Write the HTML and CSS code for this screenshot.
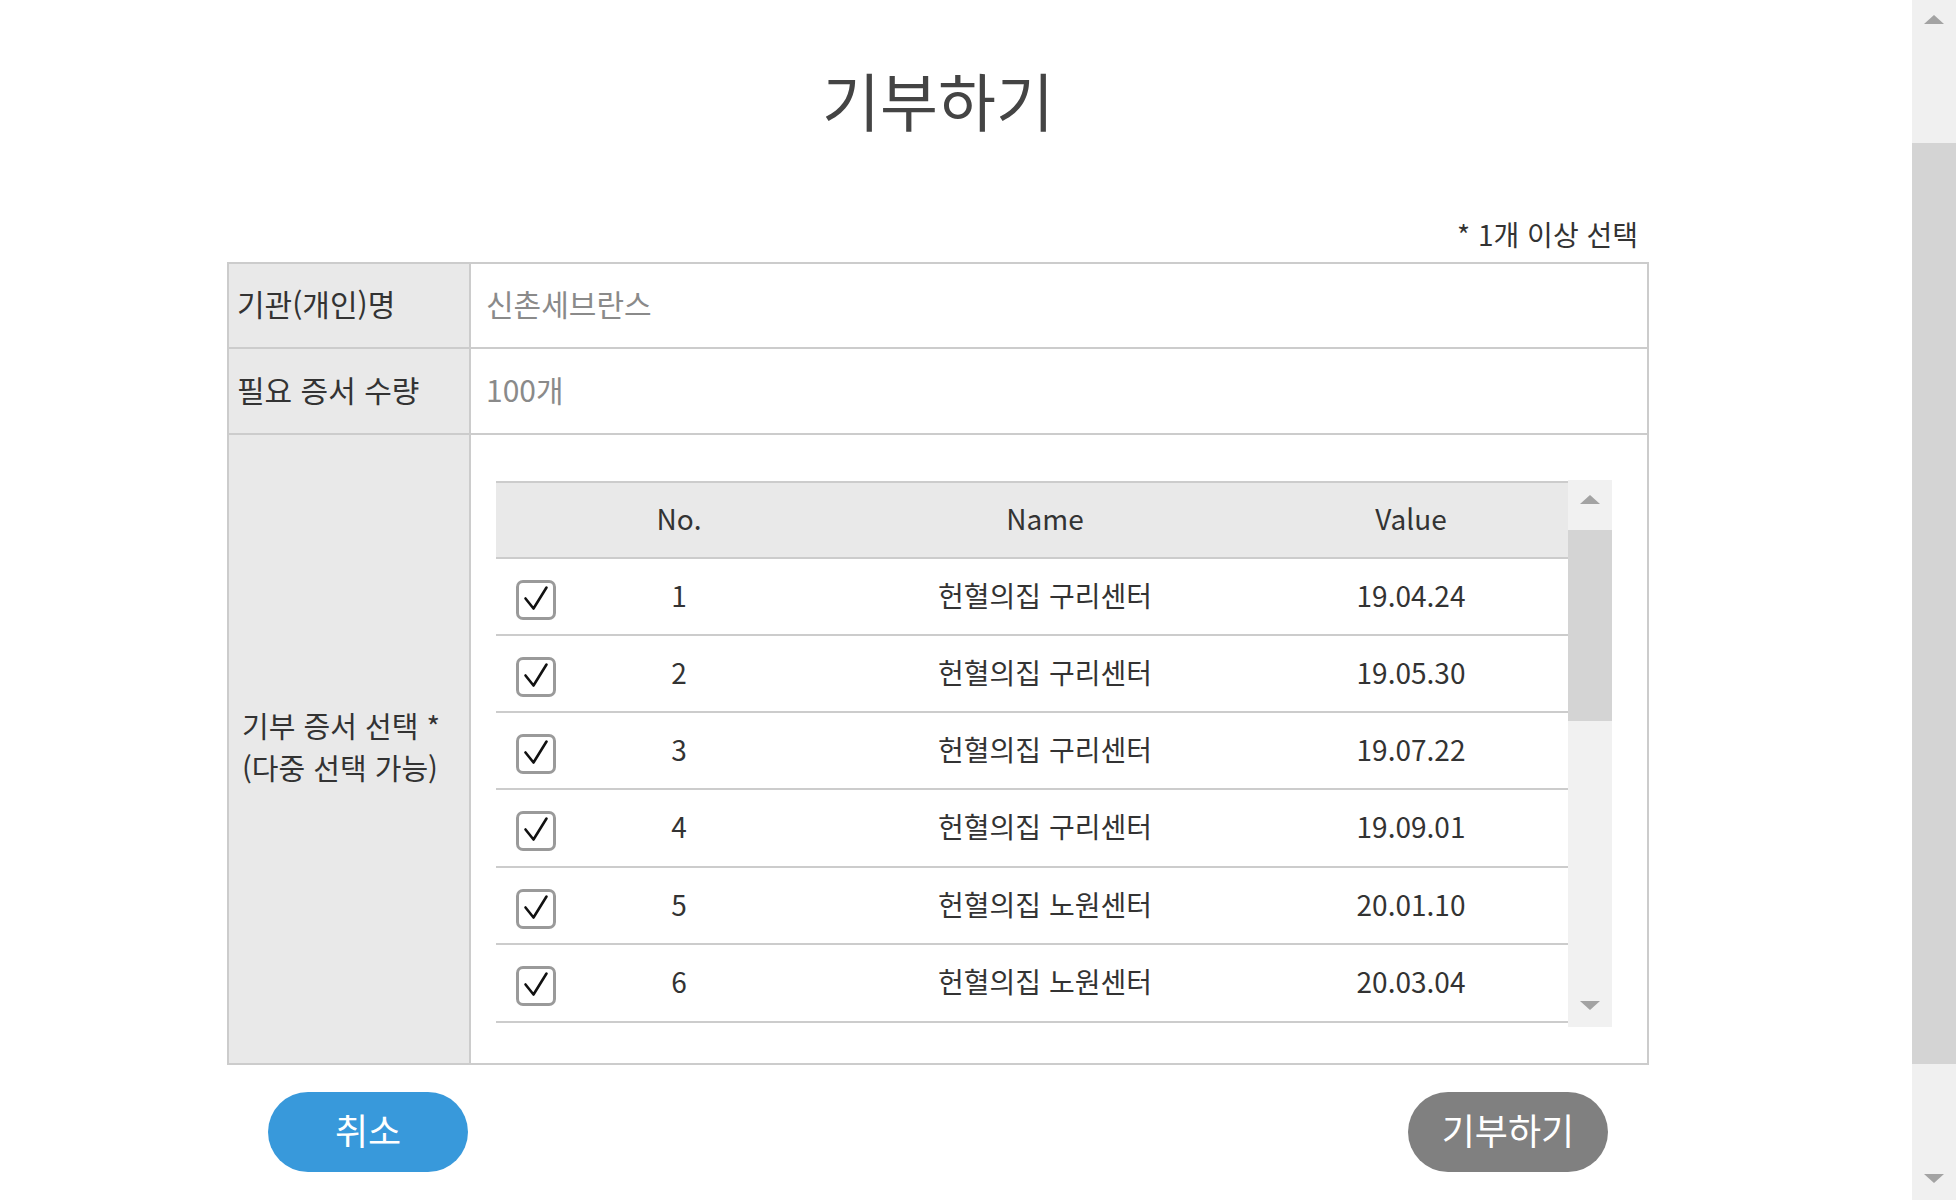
FILE: index.html
```html
<!DOCTYPE html>
<html lang="ko">
<head>
<meta charset="utf-8">
<title>기부하기</title>
<link rel="stylesheet" href="styles.css">
</head>
<body>
<div class="page">
  <main class="main">
    <div class="form">
      <h1 class="title">기부하기</h1>
      <p class="note">* 1개 이상 선택</p>
      <div class="form-table">
        <div class="form-row row-name">
          <div class="label">기관(개인)명</div>
          <div class="value">신촌세브란스</div>
        </div>
        <div class="form-row row-qty">
          <div class="label">필요 증서 수량</div>
          <div class="value">100개</div>
        </div>
        <div class="form-row row-list">
          <div class="label label-multi">기부 증서 선택 *<br>(다중 선택 가능)</div>
          <div class="list-cell">
            <div class="list-box">
              <div class="list-viewport">
                <div class="grid grid-head">
                  <div class="c-check"></div>
                  <div class="c-no">No.</div>
                  <div class="c-name">Name</div>
                  <div class="c-val">Value</div>
                </div>
                <div class="grid grid-row">
                  <div class="c-check"><span class="checkbox"><svg viewBox="0 0 34 34" width="34" height="34"><path d="M6.5 15.5 L14.5 25.5 L27.5 4.5" fill="none" stroke="#111" stroke-width="2.6" stroke-linecap="round" stroke-linejoin="round"/></svg></span></div>
                  <div class="c-no">1</div>
                  <div class="c-name">헌혈의집 구리센터</div>
                  <div class="c-val">19.04.24</div>
                </div>
                <div class="grid grid-row">
                  <div class="c-check"><span class="checkbox"><svg viewBox="0 0 34 34" width="34" height="34"><path d="M6.5 15.5 L14.5 25.5 L27.5 4.5" fill="none" stroke="#111" stroke-width="2.6" stroke-linecap="round" stroke-linejoin="round"/></svg></span></div>
                  <div class="c-no">2</div>
                  <div class="c-name">헌혈의집 구리센터</div>
                  <div class="c-val">19.05.30</div>
                </div>
                <div class="grid grid-row">
                  <div class="c-check"><span class="checkbox"><svg viewBox="0 0 34 34" width="34" height="34"><path d="M6.5 15.5 L14.5 25.5 L27.5 4.5" fill="none" stroke="#111" stroke-width="2.6" stroke-linecap="round" stroke-linejoin="round"/></svg></span></div>
                  <div class="c-no">3</div>
                  <div class="c-name">헌혈의집 구리센터</div>
                  <div class="c-val">19.07.22</div>
                </div>
                <div class="grid grid-row row-78">
                  <div class="c-check"><span class="checkbox"><svg viewBox="0 0 34 34" width="34" height="34"><path d="M6.5 15.5 L14.5 25.5 L27.5 4.5" fill="none" stroke="#111" stroke-width="2.6" stroke-linecap="round" stroke-linejoin="round"/></svg></span></div>
                  <div class="c-no">4</div>
                  <div class="c-name">헌혈의집 구리센터</div>
                  <div class="c-val">19.09.01</div>
                </div>
                <div class="grid grid-row">
                  <div class="c-check"><span class="checkbox"><svg viewBox="0 0 34 34" width="34" height="34"><path d="M6.5 15.5 L14.5 25.5 L27.5 4.5" fill="none" stroke="#111" stroke-width="2.6" stroke-linecap="round" stroke-linejoin="round"/></svg></span></div>
                  <div class="c-no">5</div>
                  <div class="c-name">헌혈의집 노원센터</div>
                  <div class="c-val">20.01.10</div>
                </div>
                <div class="grid grid-row row-78">
                  <div class="c-check"><span class="checkbox"><svg viewBox="0 0 34 34" width="34" height="34"><path d="M6.5 15.5 L14.5 25.5 L27.5 4.5" fill="none" stroke="#111" stroke-width="2.6" stroke-linecap="round" stroke-linejoin="round"/></svg></span></div>
                  <div class="c-no">6</div>
                  <div class="c-name">헌혈의집 노원센터</div>
                  <div class="c-val">20.03.04</div>
                </div>
              </div>
              <div class="vscroll">
                <div class="vs-up"><span class="tri-up"></span></div>
                <div class="vs-thumb"></div>
                <div class="vs-track"></div>
                <div class="vs-down"><span class="tri-down"></span></div>
              </div>
            </div>
          </div>
        </div>
      </div>
      <div class="actions">
        <button class="btn btn-cancel" type="button">취소</button>
        <button class="btn btn-submit" type="button">기부하기</button>
      </div>
    </div>
  </main>
  <div class="page-scroll">
    <div class="ps-up"><span class="tri-up"></span></div>
    <div class="ps-thumb"></div>
    <div class="ps-down"><span class="tri-down"></span></div>
  </div>
</div>
</body>
</html>
```

FILE: styles.css
```css
html, body {
  margin: 0;
  padding: 0;
  height: 100%;
  overflow: hidden;
  background: #ffffff;
}

body {
  font-family: "Noto Sans CJK KR", "Noto Sans", sans-serif;
  color: #333333;
}

.page {
  display: flex;
  height: 1200px;
}

.main {
  flex: 1;
  overflow: hidden;
}

.form {
  width: 1422px;
  margin-left: 227px;
  padding-top: 61px;
}

.title {
  margin: 0;
  font-size: 63px;
  line-height: 76px;
  font-weight: 400;
  color: #444444;
  text-align: center;
}

.note {
  margin: 79px 0 10px;
  padding-right: 11px;
  font-size: 28px;
  line-height: 36px;
  text-align: right;
  color: #333333;
}

.form-table {
  border: 2px solid #cccccc;
}

.form-row {
  display: flex;
  box-sizing: border-box;
  border-bottom: 2px solid #cccccc;
}

.row-name { height: 85px; }
.row-qty { height: 86px; }
.row-list { height: 628px; border-bottom: none; }

.label {
  flex: none;
  border-right: 2px solid #cccccc;
  background: #e9e9e9;
  display: flex;
  align-items: center;
  padding-left: 8px;
  padding-bottom: 5px;
  box-sizing: border-box;
  width: 242px;
  font-size: 30px;
  line-height: 42px;
  color: #333333;
}

.label-multi {
  padding-left: 13px;
  padding-bottom: 6px;
  font-size: 29px;
}

.value {
  flex: 1;
  display: flex;
  align-items: center;
  padding-left: 15px;
  padding-bottom: 5px;
  font-size: 30px;
  color: #8a8a8a;
}

.list-cell {
  flex: 1;
  padding: 45px 35px 36px 25px;
}

.list-box {
  display: flex;
  height: 547px;
}

.list-viewport {
  width: 1072px;
  overflow: hidden;
  padding-top: 1px;
}

.grid {
  display: grid;
  grid-template-columns: 84px 198px 534px 256px;
  align-items: center;
  box-sizing: border-box;
  font-size: 28px;
  color: #333333;
  text-align: center;
}

.c-no, .c-name, .c-val {
  padding-bottom: 4px;
}

.grid-head {
  height: 78px;
  border-top: 2px solid #cccccc;
  border-bottom: 2px solid #cccccc;
  background: #e9e9e9;
}

.grid-row {
  height: 77px;
  border-bottom: 2px solid #cccccc;
}

.grid-row.row-78 {
  height: 78px;
}

.c-check {
  display: flex;
  align-items: center;
  padding-left: 20px;
  padding-top: 6px;
}

.c-val {
  padding-right: 58px;
}

.checkbox {
  display: block;
  width: 40px;
  height: 40px;
  box-sizing: border-box;
  border: 3px solid #9a9a9a;
  border-radius: 7px;
  background: #ffffff;
}

.checkbox svg {
  display: block;
}

.vscroll {
  width: 44px;
  display: flex;
  flex-direction: column;
  background: #f1f1f1;
}

.vs-up {
  height: 50px;
  box-sizing: border-box;
  padding-top: 15px;
  display: flex;
  justify-content: center;
  align-items: flex-start;
}

.vs-thumb {
  height: 191px;
  background: #d4d4d4;
}

.vs-track {
  flex: 1;
}

.vs-down {
  height: 50px;
  box-sizing: border-box;
  padding-top: 24px;
  display: flex;
  justify-content: center;
  align-items: flex-start;
}

.tri-up {
  width: 0;
  height: 0;
  border-left: 10px solid transparent;
  border-right: 10px solid transparent;
  border-bottom: 9px solid #a3a3a3;
}

.tri-down {
  width: 0;
  height: 0;
  border-left: 10px solid transparent;
  border-right: 10px solid transparent;
  border-top: 9px solid #a3a3a3;
}

.actions {
  display: flex;
  justify-content: space-between;
  padding: 27px 41px 0;
}

.btn {
  width: 200px;
  height: 80px;
  border: none;
  border-radius: 40px;
  font-family: "Noto Sans CJK KR", "Noto Sans", sans-serif;
  font-size: 36px;
  color: #ffffff;
  padding: 0 0 6px;
  line-height: 74px;
}

.btn-cancel {
  background: #3899db;
}

.btn-submit {
  background: #808080;
}

.page-scroll {
  width: 44px;
  flex: none;
  display: flex;
  flex-direction: column;
  background: #f0f0f0;
}

.ps-up {
  height: 143px;
  box-sizing: border-box;
  padding-top: 15px;
  display: flex;
  justify-content: center;
  align-items: flex-start;
}

.ps-thumb {
  height: 921px;
  background: #d4d4d4;
}

.ps-down {
  flex: 1;
  box-sizing: border-box;
  padding-bottom: 17px;
  display: flex;
  justify-content: center;
  align-items: flex-end;
}
```
